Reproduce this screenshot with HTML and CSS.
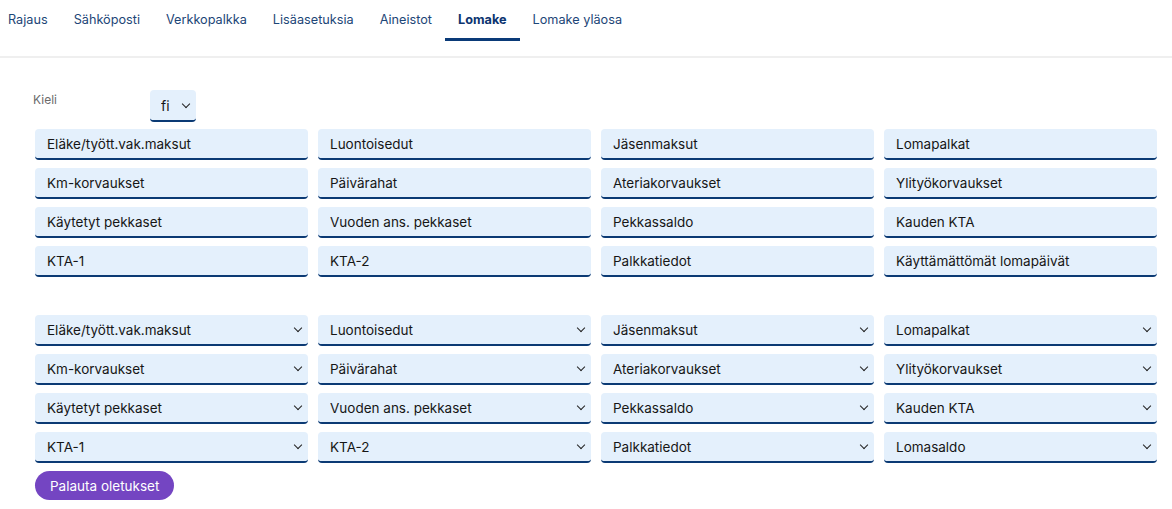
FILE: index.html
```html
<!DOCTYPE html>
<html>
    <head>
        <title>Lomake</title>
        <link rel="stylesheet" href="styles.css">
    </head>
    <body>
        <nav class="tabs">
            <a class="tab">Rajaus</a>
            <a class="tab">Sähköposti</a>
            <a class="tab">Verkkopalkka</a>
            <a class="tab">Lisäasetuksia</a>
            <a class="tab">Aineistot</a>
            <a class="tab active">Lomake</a>
            <a class="tab">Lomake yläosa</a>
        </nav>

        <main class="form">
            <div class="langRow">
                <label class="langLabel">Kieli</label>
                <div class="selWrap small">
                    <select class="field">
                        <option>fi</option>
                    </select>
                </div>
            </div>

            <div class="grid">
                <input class="field" value="Eläke/tyött.vak.maksut">
                <input class="field" value="Luontoisedut">
                <input class="field" value="Jäsenmaksut">
                <input class="field" value="Lomapalkat">
                <input class="field" value="Km-korvaukset">
                <input class="field" value="Päivärahat">
                <input class="field" value="Ateriakorvaukset">
                <input class="field" value="Ylityökorvaukset">
                <input class="field" value="Käytetyt pekkaset">
                <input class="field" value="Vuoden ans. pekkaset">
                <input class="field" value="Pekkassaldo">
                <input class="field" value="Kauden KTA">
                <input class="field" value="KTA-1">
                <input class="field" value="KTA-2">
                <input class="field" value="Palkkatiedot">
                <input class="field" value="Käyttämättömät lomapäivät">
            </div>

            <div class="grid selects">
                <div class="selWrap"><select class="field"><option>Eläke/tyött.vak.maksut</option></select></div>
                <div class="selWrap"><select class="field"><option>Luontoisedut</option></select></div>
                <div class="selWrap"><select class="field"><option>Jäsenmaksut</option></select></div>
                <div class="selWrap"><select class="field"><option>Lomapalkat</option></select></div>
                <div class="selWrap"><select class="field"><option>Km-korvaukset</option></select></div>
                <div class="selWrap"><select class="field"><option>Päivärahat</option></select></div>
                <div class="selWrap"><select class="field"><option>Ateriakorvaukset</option></select></div>
                <div class="selWrap"><select class="field"><option>Ylityökorvaukset</option></select></div>
                <div class="selWrap"><select class="field"><option>Käytetyt pekkaset</option></select></div>
                <div class="selWrap"><select class="field"><option>Vuoden ans. pekkaset</option></select></div>
                <div class="selWrap"><select class="field"><option>Pekkassaldo</option></select></div>
                <div class="selWrap"><select class="field"><option>Kauden KTA</option></select></div>
                <div class="selWrap"><select class="field"><option>KTA-1</option></select></div>
                <div class="selWrap"><select class="field"><option>KTA-2</option></select></div>
                <div class="selWrap"><select class="field"><option>Palkkatiedot</option></select></div>
                <div class="selWrap"><select class="field"><option>Lomasaldo</option></select></div>
            </div>

            <button class="resetBtn">Palauta oletukset</button>
        </main>
    </body>
</html>
```

FILE: styles.css
```css
body {
    margin: 0;
    font-family: "Inter", "Open Sans", sans-serif;
    color: #161616;
    background: #fff;
}

/* välilehdet */
.tabs {
    display: flex;
    height: 56px;
    margin-left: -5px;
    border-bottom: 2px solid #efefef;
}
.tab {
    display: flex;
    align-items: center;
    height: 38px;
    padding: 0 13px 0 13px;
    font-size: 12.7px;
    color: #1d4677;
    border-bottom: 3px solid transparent;
    cursor: pointer;
}
.tab.active {
    font-weight: 700;
    color: #0c3470;
    border-bottom-color: #0a3a78;
}

.form {
    width: 1122px;
    padding: 32px 0 0 35px;
}
.langRow {
    display: flex;
    align-items: flex-start;
}
.langLabel {
    width: 117px;
    margin-left: -2px;
    padding-top: 2px;
    font-size: 12px;
    color: #6b6b6b;
}

.grid {
    display: grid;
    grid-template-columns: repeat(4, 273px);
    column-gap: 10px;
    row-gap: 8px;
    margin-top: 7px;
}
.grid.selects {
    margin-top: 38px;
}

.field {
    box-sizing: border-box;
    width: 100%;
    height: 31px;
    margin: 0;
    padding: 0 12px;
    border: none;
    border-bottom: 2px solid #0b3a74;
    border-radius: 4px;
    background: #e4f0fc;
    font-family: inherit;
    font-size: 13.5px;
    color: #161616;
    outline: none;
}
select.field {
    appearance: none;
    -webkit-appearance: none;
    padding-right: 24px;
}

.selWrap {
    position: relative;
}
.selWrap::after {
    content: "";
    position: absolute;
    right: 7px;
    top: 10px;
    width: 5px;
    height: 5px;
    border-right: 1.6px solid #222;
    border-bottom: 1.6px solid #222;
    transform: rotate(45deg);
    pointer-events: none;
}
.selWrap.small {
    width: 46px;
}
.selWrap.small .field {
    height: 32px;
    padding: 0 0 0 11px;
    font-size: 14px;
}
.selWrap.small::after {
    top: 11px;
}

.resetBtn {
    margin-top: 8px;
    height: 29px;
    padding: 0 15px;
    border: none;
    border-radius: 15px;
    background: #7445c2;
    color: #fff;
    font-family: inherit;
    font-size: 13.5px;
    cursor: pointer;
}
```
